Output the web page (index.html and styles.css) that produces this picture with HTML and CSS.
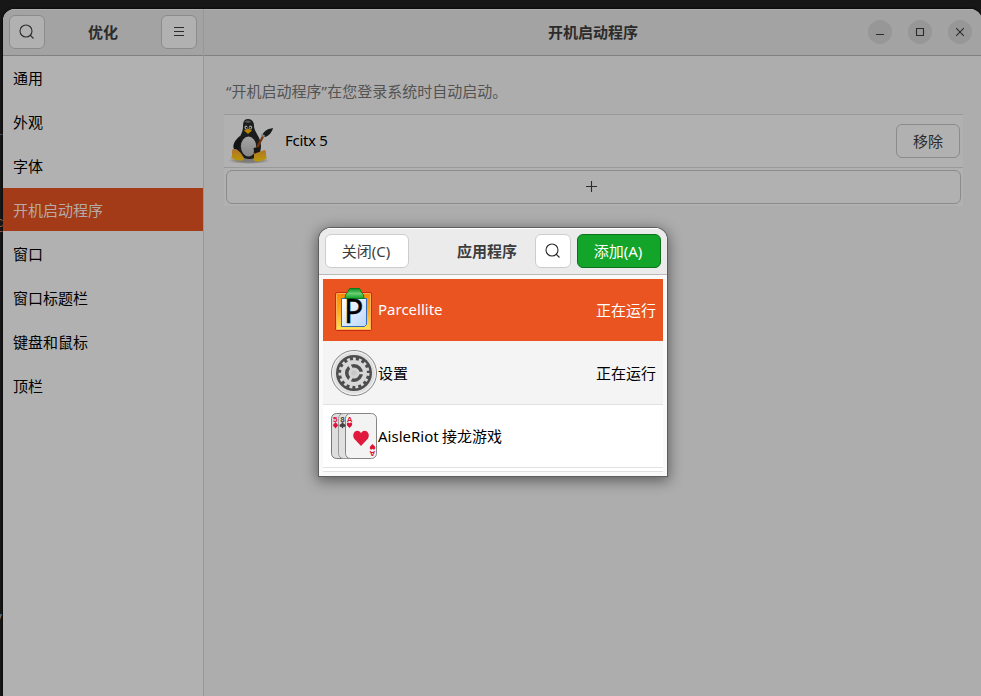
FILE: index.html
```
<!DOCTYPE html>
<html lang="zh-CN">
<head>
<meta charset="utf-8">
<title>优化</title>
<link rel="stylesheet" href="styles.css">
</head>
<body>
<div class="terminal"><span class="t1">_</span><span class="t2">c</span><span class="t3">y</span></div>
<div class="window">
  <aside class="sidebar">
    <header class="bar side-bar">
      <button class="btn icon"><svg width="16" height="16" viewBox="0 0 16 16"><circle cx="7" cy="7" r="6" /><path d="M11 11l3.500 3.500" /></svg></button>
      <h1>优化</h1>
      <button class="btn icon"><svg width="16" height="16" viewBox="0 0 16 16"><path d="M3 3.500h10M3 7.500h10M3 11.500h10" /></svg></button>
    </header>
    <nav>
      <a>通用</a><a>外观</a><a>字体</a><a class="current">开机启动程序</a><a>窗口</a><a>窗口标题栏</a><a>键盘和鼠标</a><a>顶栏</a>
    </nav>
  </aside>
  <main class="main">
    <header class="bar main-bar">
      <h1>开机启动程序</h1>
      <div class="controls">
        <i><svg width="24" height="24" viewBox="0 0 24 24"><path d="M8 14.500h8" /></svg></i>
        <i><svg width="24" height="24" viewBox="0 0 24 24"><path d="M8.500 8.500h7v7h-7z" /></svg></i>
        <i><svg width="24" height="24" viewBox="0 0 24 24"><path d="M8.200 8.200l7.600 7.600M15.800 8.200l-7.600 7.600" /></svg></i>
      </div>
    </header>
    <section class="content">
      <p><span class="quote">“</span>开机启动程序<span class="quote">”</span>在您登录系统时自动启动。</p>
      <div class="startup">
        <div class="app">
          <svg class="tux" width="48" height="48" viewBox="0 0 48 48">
            <defs>
              <linearGradient id="foot" x1="0" y1="0" x2="0" y2="1"><stop offset="0" stop-color="#b2702c"/><stop offset="1" stop-color="#b89a05"/></linearGradient>
              <linearGradient id="belly" x1="0" y1="0" x2="0" y2="1"><stop offset="0" stop-color="#a5a5a5"/><stop offset="1" stop-color="#858585"/></linearGradient>
              <radialGradient id="shade"><stop offset=".5" stop-color="#7d7b77"/><stop offset="1" stop-color="#7d7b77" stop-opacity="0"/></radialGradient>
            </defs>
            <ellipse cx="23" cy="43.500" rx="21" ry="3.500" fill="url(#shade)"/>
            <path d="M22 2c4 0 6 3 6 7 0 6 7 11 7 20 0 8-4 13-12 13S11 37 11 29c0-7 6-12 6-19 0-5 1-8 5-8z" fill="#1b1c1d"/>
            <path d="M14 19c-5 4-8 9-6 13l4 1 3-9z" fill="#131415"/>
            <ellipse cx="22.500" cy="29.500" rx="7.600" ry="10" fill="url(#belly)"/>
            <path d="M18.500 5c1-2 5-2 7 0l-3.500 1z" fill="#555"/>
            <ellipse cx="20" cy="10.500" rx="1.500" ry="2" fill="#a0a0a0"/><ellipse cx="24.500" cy="10.500" rx="1.700" ry="2" fill="#a0a0a0"/>
            <circle cx="20.400" cy="10.700" r=".8"/><circle cx="24.200" cy="10.700" r=".8"/>
            <path d="M18 13.500l4-2 4 2-4 3.500z" fill="#b58305"/>
            <path d="M7 32c5-1 9 5 11 9-1 4-6 3-13 0 2-3 0-7 2-9zM28 35c4 2 8-2 11-2 2 2 0 5 2 8-4 3-11 5-13 2z" fill="url(#foot)"/>
            <path d="M27 36l10-19 2 1-9 17z" fill="#76370b"/>
            <path d="M36 18c3-5 6-6 11-7-1 4-4 8-8 9z" fill="#17191a"/>
            <path d="M35 18.500l3 2 1-2-3-2z" fill="#808080"/>
            <path d="M27.500 31l5-1 1 4-5 3z" fill="#161616"/>
          </svg>
          <span class="latin fcitx">Fcitx 5</span>
          <button class="btn remove">移除</button>
        </div>
        <div class="add-row"><button class="btn plus"><svg width="16" height="16" viewBox="0 0 16 16"><path d="M3 7.500h11M8.500 2v11" /></svg></button></div>
      </div>
    </section>
  </main>
</div>

<div class="dialog">
  <header class="dialog-bar">
    <button class="dbtn close">关闭<span class="latin">(C)</span></button>
    <h2>应用程序</h2>
    <button class="dbtn search"><svg width="16" height="16" viewBox="0 0 16 16"><circle cx="7" cy="7" r="6" /><path d="M11 11l3.500 3.500" /></svg></button>
    <button class="dbtn add">添加<span class="latin">(A)</span></button>
  </header>
  <div class="list">
    <div class="row selected">
      <svg width="48" height="48" viewBox="0 0 48 48">
        <defs>
          <linearGradient id="board" x1="0" y1="0" x2="0" y2="1"><stop offset="0" stop-color="#ff8500"/><stop offset=".55" stop-color="#ffae20"/><stop offset="1" stop-color="#ffe75a"/></linearGradient>
          <linearGradient id="paper" x1="0" y1="0" x2="1" y2="1"><stop offset="0" stop-color="#fff"/><stop offset="1" stop-color="#b9d6fa"/></linearGradient>
          <linearGradient id="clip" x1="0" y1="0" x2="0" y2="1"><stop offset="0" stop-color="#0a8c23"/><stop offset=".5" stop-color="#69cf70"/><stop offset="1" stop-color="#11a228"/></linearGradient>
        </defs>
        <rect x="5.500" y="6.500" width="36" height="38" rx="1.500" fill="url(#board)" stroke="#c92912"/>
        <rect x="6.500" y="7.500" width="34" height="36" rx="1" fill="none" stroke="#ffb25c"/>
        <path d="M11.500 12.500h25V38.500l-2 2h-23z" fill="url(#paper)" stroke="#3269bd"/>
        <path d="M19.500 2.500h10l2 4q2.500 1 2.500 6H15q0-5 2.500-6z" fill="url(#clip)" stroke="#078019"/>
        <text x="14" y="36.500" class="letter">P</text>
      </svg>
      <span class="latin parcel">Parcellite</span><span class="status">正在运行</span>
    </div>
    <div class="row settings">
      <svg width="48" height="48" viewBox="0 0 48 48">
        <circle cx="24" cy="24" r="22.500" fill="#dfdfdf" stroke="#858585"/>
        <circle cx="24" cy="24" r="21.300" fill="none" stroke="#f5f5f5"/>
        <circle cx="24" cy="24" r="18" fill="#4c4c4c"/>
        <circle cx="24" cy="24" r="14" fill="none" stroke="#d8d8d8" stroke-width="3" stroke-dasharray="2.900 2.964"/>
        <circle cx="24" cy="24" r="11" fill="none" stroke="#d8d8d8" stroke-width="4"/>
        <path d="M24 24H35M24 24L18.500 14.500M24 24L18.500 33.500" stroke="#d8d8d8" stroke-width="2.600"/>
        <circle cx="24" cy="24" r="5.500" fill="#d2d2d2"/>
        <circle cx="24" cy="24" r="2.500" fill="#c6c6c6"/>
      </svg>
      <span>设置</span><span class="status">正在运行</span>
    </div>
    <div class="row">
      <svg width="48" height="48" viewBox="0 0 48 48">
        <rect x="1.500" y="1.500" width="30" height="45" rx="5" fill="#dedede" stroke="#777"/>
        <rect x="8.500" y="1.500" width="30" height="45" rx="5" fill="#e0e0e0" stroke="#999"/>
        <rect x="15.500" y="1.500" width="31" height="45" rx="5" fill="#f3f3f3" stroke="#858585"/>
        <text x="3" y="9.500" class="pip red">5</text><text x="10.200" y="9.500" class="pip">8</text><text x="16.800" y="9.500" class="pip red">A</text>
        <path d="M5.500 10l2.700 3.200-2.700 3.200-2.700-3.200z" fill="#df1337"/>
        <path d="M12.500 10q2 1 1 2 2-.5 2 1.500t-2.300 1.200v1.600h-1.400v-1.600q-2.300.8-2.300-1.200t2-1.500q-1-1 1-2z" fill="#444"/>
        <path d="M19.500 16l-2.400-2.500q-1-2 .5-3 1-.4 1.900.8.900-1.200 1.900-.8 1.500 1 .5 3z" fill="#df1337"/>
        <path d="M31 34l-7-7.500q-2-4 1-7 3.500-2 6 1.500 2.500-3.500 6-1.500 3 3 1 7z" fill="#df1a3c"/>
        <g transform="rotate(180 42.500 38)"><text x="39.800" y="37.500" class="pip red">A</text><path d="M42.500 44l-2.400-2.500q-1-2 .5-3 1-.4 1.900.8.900-1.200 1.900-.8 1.500 1 .5 3z" fill="#df1337"/></g>
      </svg>
      <span><span class="latin aisle">AisleRiot</span> 接龙游戏</span>
    </div>
    <div class="next"></div>
  </div>
</div>
</body>
</html>
```
FILE: styles.css
```
* { box-sizing: border-box; }
body {
  margin: 0;
  width: 981px;
  height: 696px;
  overflow: hidden;
  background: #171717;
  padding: 9px 0 0 3px;
  font: 15px/20px "Noto Sans CJK SC", sans-serif;
  color: #000;
}
h1, h2, p { margin: 0; }
h1, h2 { font-size: 15px; line-height: 20px; font-weight: 700; text-align: center; }
button { font: inherit; padding: 0; display: flex; align-items: center; justify-content: center; }
svg { display: block; flex: none; }
.latin { font-family: "Noto Sans", sans-serif; }

/* Terminal text showing past the left edge of the window */
.terminal span { position: absolute; left: -4px; color: #925a43; font: 14px/14px "Liberation Mono", monospace; }
.terminal .t1 { top: 122px; left: -5px; color: #777; }
.terminal .t2 { top: 216px; text-decoration: underline; text-underline-offset: 4px; }
.terminal .t3 { top: 611px; left: -6px; color: #888; }

.window {
  position: relative;
  display: flex;
  width: 979px;
  height: 687px;
  border-radius: 12px 12px 0 0;
  overflow: hidden;
  background: #adadad;
  box-shadow: 0 0 3px #000;
}
.sidebar { width: 201px; background: #b1b1b1; border-right: 1px solid #989898; }
.main { flex: 1; }
.bar { height: 47px; background: #a3a3a3; border-bottom: 1px solid #818181; box-shadow: inset 0 1px #b0b0b0; display: flex; align-items: center; color: #2b2b2b; }
.side-bar { padding: 0 6px; justify-content: space-between; }
.btn { border: 1px solid #8b8b8b; border-radius: 6px; background: #b1b1b1; color: #2b2b2b; height: 34px; }
.btn svg, .dbtn svg, .controls svg { fill: none; stroke: #2b2b2b; stroke-width: 1.1; }
.icon { width: 36px; }
.main-bar { padding: 0 9px 0 0; position: relative; justify-content: center; }
.main-bar h1 { width: 100%; padding-left: 9px; }
.controls { position: absolute; right: 10px; top: 11px; display: flex; gap: 16px; }
.controls i { width: 24px; height: 24px; border-radius: 50%; background: #979797; }

nav a { display: flex; align-items: center; height: 43px; margin-bottom: 1px; padding: 0 10px; }
nav .current { background: #a33b18; color: #b5aaa6; }

.content { padding: 25px 18px 0 20px; }
.content p { height: 33px; padding: 0 0 0 2px; color: #535353; white-space: nowrap; }
.quote { font-family: "Noto Sans", sans-serif; letter-spacing: .2px; }
.startup { width: 739px; background: #b1b1b1; }
.app { height: 54px; border-top: 1px solid #999; border-bottom: 1px solid #999; display: flex; align-items: center; padding: 0 3px 0 2px; }
.fcitx { flex: 1; margin: -2px 0 0 11px; letter-spacing: -.3px; }
.remove { width: 64px; }
.add-row { padding: 2px; height: 38px; }
.plus { width: 735px; padding-right: 5px; }

.dialog {
  position: absolute;
  left: 319px;
  top: 228px;
  width: 348px;
  height: 248px;
  border-radius: 12px 12px 0 0;
  background: #fafafa;
  overflow: hidden;
  box-shadow: 0 0 0 1px #5e5e5e, 0 3px 14px 2px rgba(0,0,0,.45);
}
.dialog-bar { height: 47px; padding: 0 6px; display: flex; align-items: center; background: #ebebeb; border-bottom: 1px solid #b9b9b9; box-shadow: inset 0 1px #fff; color: #3d3d3d; }
.dialog-bar h2 { flex: 1; padding-left: 30px; }
.dbtn { height: 34px; border: 1px solid #cdcdcd; border-radius: 6px; background: #fff; color: #3d3d3d; }
.close, .add { width: 84px; padding-right: 2px; }
.search { width: 36px; margin-right: 6px; }
.add { background: #12a52a; border-color: #0d701d; color: #fff; }
.list { margin: 4px; background: #fff; }
.row { height: 63px; padding: 0 7px; display: flex; align-items: center; border-bottom: 1px solid #e1e1e1; }
.selected { height: 62px; background: #e95420; color: #fff; border-bottom: 0; }
.settings { height: 64px; background: #f4f4f4; }
.status { margin-left: auto; }
.next { height: 4px; border-bottom: 1px solid #e1e1e1; }
.parcel { margin-top: -2px; }
.aisle { letter-spacing: 0; }
.letter { font: 32px "Noto Sans", sans-serif; fill: #000; stroke: #000; stroke-width: .4; }
.pip { font: bold 8px "Liberation Sans", sans-serif; fill: #444; }
.pip.red { fill: #df1337; }
```
